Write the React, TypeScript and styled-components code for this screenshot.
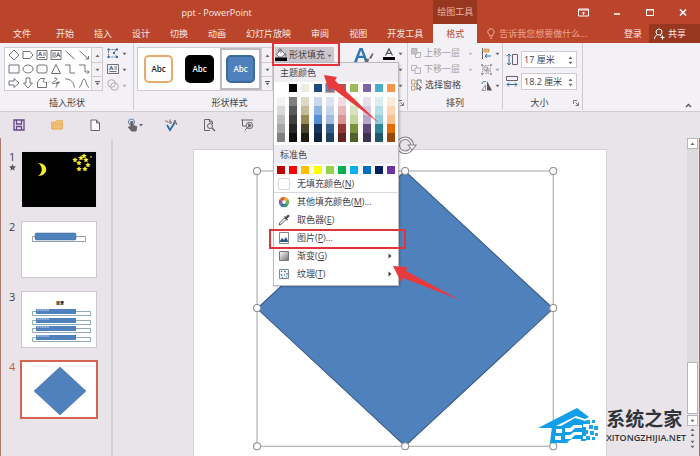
import React from "react";
import styled, { createGlobalStyle, css } from "styled-components";

const color = {
  brand: "#ba452b",
  brandDark: "#98371f",
  ribbon: "#f3f1f5",
  shell: "#e8e4e9",
  line: "#cfcbd1",
  text: "#444148",
  muted: "#a3a0a7",
  blue: "#4f81bd",
  mark: "#e0353a",
};

const Global = createGlobalStyle`
  * { box-sizing: border-box; }
  body { margin: 0; }
  button, input { font: inherit; color: inherit; }
  button { border: 0; padding: 0; background: none; cursor: pointer; }
  svg { display: block; flex: none; overflow: visible; }
`;

const Window = styled.div`
  position: relative;
  display: flex;
  flex-direction: column;
  min-height: 100vh;
  overflow: hidden;
  background: ${color.shell};
  color: ${color.text};
  font: 9px/12px "Open Sans", "Noto Sans CJK SC", sans-serif;
`;

/* ---------- header ---------- */

const Header = styled.header`
  display: grid;
  grid-template-columns: auto auto 1fr;
  grid-template-rows: 24px 19px;
  background: ${color.brand};
  color: #fbe9e4;
`;

const Title = styled.h1`
  margin: 0;
  font: inherit;
  text-align: center;
  padding: 7px 0 0;
`;

const ContextLabel = styled.div`
  display: flex;
  align-items: center;
  justify-content: center;
  background: ${color.brandDark};
  color: #eab4a5;
`;

const WindowControls = styled.div`
  display: flex;
  justify-content: flex-end;
  align-items: center;
  gap: 23px;
  padding-right: 12px;
`;

const TabList = styled.nav`
  display: flex;
  padding-left: 3px;
`;

const Tab = styled.button<{ $active?: boolean; $file?: boolean }>`
  padding: 0 10px;
  white-space: nowrap;
  ${(p) => p.$file && css`margin-right: 5px;`}
  ${(p) =>
    p.$active &&
    css`
      padding: 0 13px;
      background: ${color.ribbon};
      color: ${color.brand};
    `}
`;

const HeaderTools = styled.div`
  display: flex;
  align-items: stretch;
`;

const TellMe = styled.label`
  display: flex;
  flex: 1;
  align-items: center;
  gap: 4px;
  padding-left: 10px;
  color: #eda593;
`;

const TellInput = styled.input`
  flex: 1;
  min-width: 0;
  padding: 0;
  border: 0;
  outline: 0;
  background: none;
  &::placeholder { color: #eda593; opacity: 1; }
`;

const HeaderButton = styled.button<{ $dark?: boolean }>`
  display: flex;
  align-items: center;
  gap: 3px;
  padding: 0 ${(p) => (p.$dark ? "14px 0 5px" : "7px")};
  background: ${(p) => (p.$dark ? color.brandDark : "none")};
  white-space: nowrap;
`;

/* ---------- ribbon ---------- */

const Ribbon = styled.section`
  display: flex;
  height: 69px;
  background: ${color.ribbon};
  border-bottom: 1px solid ${color.line};
  padding: 0 8px 0 1px;
`;

const Group = styled.div<{ $divided?: boolean; $width: number }>`
  display: flex;
  flex-direction: column;
  width: ${(p) => p.$width}px;
  padding: 4px 3px 0;
  margin-bottom: 1px;
  border-right: ${(p) => (p.$divided ? `1px solid ${color.line}` : "0")};
`;

const GroupBody = styled.div<{ $gap?: number }>`
  display: flex;
  flex: 1;
  gap: ${(p) => p.$gap ?? 4}px;
`;

const GroupFooter = styled.div<{ $shift?: boolean }>`
  display: flex;
  align-items: center;
  height: 14px;
  padding-right: ${(p) => (p.$shift ? "14px" : "0")};
`;

const GroupName = styled.span`
  flex: 1;
  text-align: center;
`;

const Gallery = styled.div`
  display: flex;
  height: 44px;
  border: 1px solid ${color.line};
  background: #fff;
`;

const ShapeGrid = styled.div`
  display: grid;
  grid-template-columns: repeat(6, 14px);
  grid-template-rows: repeat(3, 14px);
  padding-left: 2px;
`;

const ShapeButton = styled.button`
  display: flex;
  align-items: center;
  justify-content: center;
`;

const GalleryScroll = styled.div`
  display: grid;
  grid-template-rows: repeat(3, 1fr);
  width: 11px;
  border-left: 1px solid ${color.line};
  background: ${color.ribbon};
`;

const ScrollStep = styled.button`
  display: flex;
  align-items: center;
  justify-content: center;
  & + & { border-top: 1px solid ${color.line}; }
`;

const Stack = styled.div<{ $roomy?: boolean }>`
  display: flex;
  flex-direction: column;
  gap: ${(p) => (p.$roomy ? 5 : 4)}px;
  padding-top: ${(p) => (p.$roomy ? 4 : 0)}px;
`;

const ToolButton = styled.button<{ $disabled?: boolean; $wide?: boolean }>`
  display: flex;
  align-items: center;
  gap: 3px;
  height: 12px;
  width: ${(p) => (p.$wide ? "62px" : "auto")};
  color: ${(p) => (p.$disabled ? color.muted : color.text)};
  white-space: nowrap;
  & > span { flex: 1; text-align: left; }
`;

const StyleList = styled.div`
  display: flex;
`;

const StyleCell = styled.button<{ $selected?: boolean }>`
  width: 41px;
  padding: 4px;
  border: 2px solid ${(p) => (p.$selected ? "#bdbabf" : "transparent")};
`;

const StyleSample = styled.span<{ $fill: string; $edge: string; $ink: string }>`
  display: flex;
  align-items: center;
  justify-content: center;
  height: 28px;
  border: 2px solid ${(p) => p.$edge};
  border-radius: 5px;
  background: ${(p) => p.$fill};
  color: ${(p) => p.$ink};
  font-size: 8px;
  font-weight: 600;
`;

const SizeRow = styled.div`
  display: flex;
  align-items: center;
  gap: 3px;
`;

const SpinBox = styled.span`
  display: flex;
  align-items: center;
  width: 56px;
  height: 17px;
  padding: 0 3px 0 2px;
  border: 1px solid ${color.line};
  background: #fff;
`;

const SizeInput = styled.input`
  flex: 1;
  min-width: 0;
  padding: 0;
  border: 0;
  outline: 0;
  background: none;
`;

const RibbonEnd = styled.div`
  display: flex;
  flex: 1;
  align-items: flex-end;
  justify-content: flex-end;
  padding-bottom: 3px;
`;

/* ---------- fill menu ---------- */

const FillAnchor = styled.div`
  position: relative;
  z-index: 2;
  height: 15px;
`;

const FillButton = styled.button`
  display: flex;
  align-items: center;
  gap: 2px;
  width: 59px;
  height: 16px;
  background: #cbc7cc;
  white-space: nowrap;
`;

const Menu = styled.div`
  position: absolute;
  top: 15px;
  left: -2px;
  width: 126px;
  padding-bottom: 2px;
  border: 1px solid #bcb8be;
  background: #fff;
  box-shadow: 1px 1px 2px rgba(0, 0, 0, 0.2);
`;

const MenuHeading = styled.h2`
  height: 19px;
  margin: 0;
  padding: 4px 6px 0;
  background: #efedf1;
  font: inherit;
`;

const SwatchRow = styled.div<{ $top: number }>`
  display: flex;
  justify-content: space-between;
  padding: ${(p) => p.$top}px 3px 0;
`;

const SwatchColumn = styled.div`
  display: flex;
  flex-direction: column;
`;

const Swatch = styled.button<{ $color: string; $ring?: boolean; $tall?: boolean }>`
  display: block;
  width: 8px;
  height: ${(p) => (p.$tall ? 9 : 8)}px;
  background: ${(p) => p.$color};
  box-shadow: ${(p) => (p.$ring ? "0 0 0 1px #e3a08f" : "none")};
`;

const MenuItem = styled.button<{ $ruled?: boolean }>`
  display: flex;
  align-items: center;
  gap: 7px;
  width: 100%;
  height: 18px;
  padding: 0 6px 0 4px;
  text-align: left;
  border-bottom: ${(p) => (p.$ruled ? "1px solid #dcd9de" : "0")};
  & > span { flex: 1; }
`;

const Emphasis = styled.div<{ $x: number; $y: number; $w: number; $h: number }>`
  position: absolute;
  left: ${(p) => p.$x}px;
  top: ${(p) => p.$y}px;
  width: ${(p) => p.$w}px;
  height: ${(p) => p.$h}px;
  border: 2px solid ${color.mark};
  pointer-events: none;
`;

const Pointer = styled.svg<{ $x: number; $y: number }>`
  position: absolute;
  left: ${(p) => p.$x}px;
  top: ${(p) => p.$y}px;
  pointer-events: none;
`;

/* ---------- quick access and workspace ---------- */

const QuickBar = styled.div`
  display: flex;
  align-items: center;
  gap: 24px;
  height: 26px;
  padding-left: 12px;
`;

const QuickButton = styled.button`
  display: flex;
  align-items: center;
  justify-content: center;
  width: 14px;
  height: 14px;
`;

const Workspace = styled.main`
  display: flex;
  flex: 1;
  border-left: 1px solid #a9796f;
  border-right: 1px solid #b4675b;
`;

const SlidePane = styled.aside`
  display: flex;
  flex-direction: column;
  gap: 13px;
  width: 112px;
  margin-top: 1px;
  padding: 12px 14px 0 8px;
  border-right: 2px solid #d6d1d8;
`;

const SlideEntry = styled.button<{ $active?: boolean }>`
  display: flex;
  gap: 4px;
  text-align: left;
  color: ${(p) => (p.$active ? "#c85a44" : color.text)};
`;

const SlideNumber = styled.span`
  display: flex;
  flex-direction: column;
  gap: 1px;
  width: 8px;
  font-size: 11px;
  line-height: 12px;
`;

const Thumb = styled.span<{ $active?: boolean; $dark?: boolean }>`
  width: 76px;
  height: 57px;
  border: 1px solid ${(p) => (p.$active ? "#d26450" : p.$dark ? "#e4e0e5" : "#cbc7cd")};
  box-shadow: ${(p) => (p.$active ? "0 0 0 1px #d26450" : "none")};
  background: ${(p) => (p.$dark ? "#000" : "#fff")};
`;

const Canvas = styled.section`
  display: flex;
  flex: 1;
  justify-content: center;
  padding-top: 11px;
`;

const Slide = styled.div`
  width: 72%;
  border: 1px solid #d2ced4;
  border-bottom: 0;
  background: #fff;
`;

const ScrollBar = styled.div`
  display: flex;
  flex-direction: column;
  align-items: center;
  width: 11px;
  margin-right: 1px;
  background: #dcdadd;
`;

const BarButton = styled.button<{ $plain?: boolean }>`
  display: flex;
  align-items: center;
  justify-content: center;
  width: 11px;
  height: ${(p) => (p.$plain ? 12 : 11)}px;
  border: ${(p) => (p.$plain ? "0" : "1px solid #b9b5bb")};
  background: ${(p) => (p.$plain ? color.shell : "#fff")};
`;

const Track = styled.div`
  display: flex;
  flex: 1;
  align-items: flex-end;
`;

const Grip = styled.div`
  width: 11px;
  height: 52px;
  border: 1px solid #b9b5bb;
  background: #fff;
`;

const BarEnd = styled.div`
  width: 11px;
  padding: 1px 0 6px;
  background: ${color.shell};
`;

const Brand = styled.div`
  position: absolute;
  right: 14px;
  bottom: 12px;
  display: flex;
  align-items: flex-end;
  gap: 7px;
  color: #30343a;
`;

const BrandText = styled.div`
  display: flex;
  flex-direction: column;
`;

const BrandName = styled.strong`
  font: 700 19px/29px "Noto Sans CJK SC", sans-serif;
`;

const BrandSite = styled.span`
  font: 600 9px/12px "Open Sans", sans-serif;
  white-space: nowrap;
`;

/* ---------- drawings ---------- */

const Caret = ({ up, bar, fill = "#6a666d" }: { up?: boolean; bar?: boolean; fill?: string }) => (
  <svg width="5" height="5" viewBox="0 0 5 5">
    {bar && <path d="M0 .5h5" stroke={fill} />}
    <path d={up ? "M.5 4L2.5 1.5 4.5 4z" : "M.5 1.7h4L2.5 4.2z"} fill={fill} />
  </svg>
);

const Launcher = () => (
  <svg width="6" height="6" viewBox="0 0 6 6" fill="none" stroke="#777">
    <path d="M.5 4V.5H4M2.5 2.5l2.5 2.5M5.5 2.5v3h-3" />
  </svg>
);

const shapes: { name: string; art: React.ReactNode }[] = [
  { name: "菱形", art: <path d="M6 1l5 5-5 5-5-5z" /> },
  { name: "五边形", art: <path d="M1 2.5h7L11 6 8 9.5H1z" /> },
  { name: "文本框", art: <><path d="M1 1.5h10v9H1zM3 8.5h6M7 4h3M7 6h3" /><path d="M2.5 7L4.2 3l1.7 4M3 5.8h2.4" stroke="#435b80" /></> },
  { name: "竖排文本框", art: <><path d="M1 1.5h10v9H1zM3 3v6M5 3v6" /><path d="M6.5 8l1.7-4.5L10 8M7 6.5h2.4" stroke="#435b80" /></> },
  { name: "直线", art: <path d="M1.5 2l9 8" /> },
  { name: "箭头", art: <path d="M1.5 2l9 8M10.5 7v3h-3" /> },
  { name: "矩形", art: <path d="M1 2h10v8H1z" /> },
  { name: "椭圆", art: <ellipse cx="6" cy="6" rx="5" ry="4" /> },
  { name: "圆角矩形", art: <rect x="1" y="2" width="10" height="8" rx="2" /> },
  { name: "三角形", art: <path d="M6 1.5l4.5 9h-9z" /> },
  { name: "肘形连接符", art: <path d="M1 2h5v8h5" /> },
  { name: "肘形箭头", art: <path d="M1 2h6v7h4M9.5 7.3L11.2 9l-1.7 1.8" /> },
  { name: "右箭头", art: <path d="M1 4h5V1.5L11 6l-5 4.500V8H1z" /> },
  { name: "下箭头", art: <path d="M4 1h4v5h2.500L6 11 1.500 6H4z" /> },
  { name: "任意多边形", art: <path d="M1.500 10.500V5l3-3.500h4C6 5 8 6 10.500 5v5.500z" /> },
  { name: "自由曲线", art: <path d="M4 1.500C8 0 8 3 4 4.500s-1 3.500 3 1-1 3-1 5M6 7l4-2" /> },
  { name: "弧形", art: <path d="M1.500 2c5 0 8 3 9 8.500" /> },
  { name: "曲线", art: <path d="M1 10.500C4 9 4 2 6 2s2 7 5 8.500" /> },
];

const ShapeIcon = ({ children }: { children: React.ReactNode }) => (
  <svg width="12" height="12" viewBox="0 0 12 12" fill="none" stroke="#626067" strokeWidth=".9">
    {children}
  </svg>
);

const EditPoints = () => (
  <svg width="12" height="12" viewBox="0 0 12 12" fill="none" stroke="#557" strokeWidth=".8">
    <path d="M1.500 2.500h8L7 6l3 4H1.500z" strokeDasharray="2 1" />
    <path d="M.5 1.500h2v2h-2zM9 1.500h2v2H9zM6 5h2v2H6zM.5 9h2v2h-2zM9 9h2v2H9z" fill="#2d6ca0" stroke="none" />
  </svg>
);

const TextBoxIcon = () => (
  <svg width="12" height="12" viewBox="0 0 12 12" fill="none" stroke="#66636b" strokeWidth=".9">
    <path d="M.5 1.500h11v9H.5zM2.500 8.500h7M7.500 4H10M7.500 6H10" />
    <path d="M2.500 7L4.300 3l1.700 4M3.200 5.700h2.200" stroke="#345d8c" />
  </svg>
);

const MergeIcon = () => (
  <svg width="12" height="12" viewBox="0 0 12 12" fill="none" stroke="#b1aeb5">
    <circle cx="4.500" cy="4.500" r="3.800" />
    <circle cx="7.500" cy="7.500" r="3.800" />
  </svg>
);

const BucketIcon = () => (
  <svg width="12" height="14" viewBox="0 0 12 14">
    <path d="M3 4.500L6 2l4 4-3.500 3H4L1.500 6.500z" fill="#fff" stroke="#555" strokeWidth=".8" />
    <path d="M4 4V1.500c0-1 2-1 2 0V5" fill="none" stroke="#555" strokeWidth=".8" />
    <path d="M10 5c1.500 1 1.500 2.500 1 4-.8-.5-1-2-1-4z" fill="#3d72ad" />
    <path d="M0 9.500h12v3.500H0z" fill="#000" />
  </svg>
);

const WordArtIcon = () => (
  <svg width="20" height="17" viewBox="0 0 20 17">
    <path d="M1 17L6.500 3h3L15 17h-3l-1.300-4H5.300L4 17zM6 10.800h4L8 5.500z" fill="#2e75b6" />
    <path d="M12 17c0-3 2-4 4-3 .5 2-1.500 3.500-4 3zM16 13l3.500-5 1 1-2.500 5z" fill="#666" />
  </svg>
);

const TextFillIcon = () => (
  <svg width="12" height="13" viewBox="0 0 12 13">
    <path d="M2.500 8.500L6 1.800l3.500 6.700M3.800 6.300h4.400" fill="none" stroke="#555" strokeWidth="1.300" />
    <path d="M0 10h12v3H0z" fill="#000" />
  </svg>
);

const LayerIcon = ({ back }: { back?: boolean }) => (
  <svg width="10" height="10" viewBox="0 0 10 10" stroke="#b3b0b7" fill="none">
    <path d={back ? "M.5 1.500h5v5h-5z" : "M4.500 4.500h5v5h-5z"} />
    <path d={back ? "M4 4h5.500v5.500H4z" : "M.5.5H6V6H.5z"} fill={back ? "#f3f1f5" : "#c4c1c8"} />
  </svg>
);

const SelectPaneIcon = () => (
  <svg width="11" height="12" viewBox="0 0 11 12" fill="none" strokeWidth=".9">
    <path d="M.5 1h3.500v4H.5zM.5 7H4v4H.5z" stroke="#c6945a" />
    <path d="M6 5V1h4v3" stroke="#666" />
    <path d="M6 4.500v6l1.500-1.500 1.200 2.300.9-.5-1-2.200h1.900z" fill="#fff" stroke="#555" />
  </svg>
);

const AlignIcon = () => (
  <svg width="11" height="11" viewBox="0 0 11 11">
    <path d="M1.500 0v11" stroke="#666" />
    <path d="M3 1h5v3H3z" fill="#e8b66c" stroke="#b9854a" strokeWidth=".6" />
    <path d="M10 8H4M6 6L4 8l2 2" stroke="#2e6da4" fill="none" />
  </svg>
);

const GroupIcon = () => (
  <svg width="11" height="11" viewBox="0 0 11 11" fill="none" stroke="#a29fa6">
    <path d="M1.500 1.500h8v8h-8z" strokeDasharray="1.500 1" />
    <path d="M3 3h3.500v3.500H3zM5 5h3v3H5z" />
    <path d="M0 0h2v2H0zM9 0h2v2H9zM0 9h2v2H0zM9 9h2v2H9z" fill="#a29fa6" stroke="none" />
  </svg>
);

const RotateIcon = () => (
  <svg width="11" height="11" viewBox="0 0 11 11">
    <path d="M6 1l5 9.500H6z" fill="#555" />
    <path d="M4.500 5v5.500H.8z" fill="none" stroke="#888" strokeWidth=".8" />
    <path d="M1 4c0-2 2-3 4-2.200" fill="none" stroke="#2e6da4" />
  </svg>
);

const SizeIcon = ({ wide }: { wide?: boolean }) => (
  <svg width="12" height="13" viewBox="0 0 12 13" fill="none">
    {wide ? (
      <>
        <path d="M.5 1.500h11v4H.5z" stroke="#66636b" />
        <path d="M1 9.500h10M3 7.500L1 9.500l2 2M9 7.500l2 2-2 2" stroke="#2e6da4" />
      </>
    ) : (
      <>
        <path d="M6.500 1.500h5v10h-5z" stroke="#66636b" />
        <path d="M3 1v11M1 3.200L3 1l2 2.200M1 9.800L3 12l2-2.200" stroke="#2e6da4" />
      </>
    )}
  </svg>
);

const quick: { name: string; art: React.ReactNode; caret?: boolean }[] = [
  { name: "保存", art: <path d="M2 2h10v10H2zM4.500 2v4h5V2M4.500 12V8.500h5V12" stroke="#66458c" strokeWidth="1.300" /> },
  { name: "打开", art: <path d="M1.500 11V4h4l1-1.500h6V11zM2 11l2-5h9l-1.500 5z" fill="#f0c078" stroke="#e8ad5a" strokeWidth=".8" /> },
  { name: "新建", art: <path d="M3 2h5.500l3 3v7.500H3zM8.500 2v3h3" fill="#fff" /> },
  { name: "触摸模式", caret: true, art: <><circle cx="5.500" cy="4" r="3" stroke="#5a83ad" /><path d="M4.800 3.500v6L3 8.500 2.500 9.500 5.500 13h4.500l.8-4.500-4-1V3.500z" fill="#666" /></> },
  { name: "拼写检查", art: <><path d="M3 7l3 5 4.500-7" stroke="#2e6da4" strokeWidth="1.800" /><path d="M1 4c1-2 3-1 3 1M6 1.500v4c2 0 2-2 0-2M9 7l1.800-5L13 7M9.800 5h2.300" strokeWidth="1" /></> },
  { name: "打印预览", art: <><path d="M8 12.500H2.500v-11H8l2.500 2.500v2M7.500 1.500V4h3" /><circle cx="8" cy="8" r="2.500" /><path d="M10 10l3 3" strokeWidth="1.500" /></> },
  { name: "从头开始放映", art: <><path d="M1 2h12M2.500 2v6H6M5 12l3-3" /><circle cx="9.500" cy="7.500" r="3.200" /><path d="M8.700 5.800v3.400l2.600-1.700z" fill="#666" /></> },
];

const StarShape = ({ x, y, r }: { x: number; y: number; r: number }) => {
  const pts = Array.from({ length: 10 }, (_, i) => {
    const d = i % 2 ? r * 0.5 : r;
    const a = (Math.PI * i) / 5 - Math.PI / 2;
    return `${x + d * Math.cos(a)},${y + d * Math.sin(a)}`;
  }).join(" ");
  return <polygon points={pts} fill="#f5ee2c" />;
};

const NightThumb = () => (
  <svg width="74" height="55" viewBox="0 0 74 55">
    <path d="M16 11c11 0 11 13 0 13 5-3 5-10 0-13z" fill="#f5ee2c" />
    {[[53, 8], [59, 6], [62, 4], [57, 11], [64, 8], [66, 13], [57, 17], [63, 17]].map(([x, y]) => (
      <StarShape key={`${x}-${y}`} x={x} y={y} r={2.800} />
    ))}
    <StarShape x={69} y={5} r={1.200} />
  </svg>
);

const BarThumb = () => (
  <svg width="74" height="55" viewBox="0 0 74 55">
    <path d="M10.500 14.500h53v5h-53z" fill="#fff" stroke="#989ca8" />
    <rect x="13" y="11" width="41" height="7" rx="1.500" fill={color.blue} stroke="#3d6799" strokeWidth=".5" />
  </svg>
);

const ListThumb = () => (
  <svg width="74" height="55" viewBox="0 0 74 55" fontFamily="Noto Sans CJK SC, sans-serif">
    <text x="38" y="13" fontSize="4" fontWeight="700" textAnchor="middle" fill="#000">目录</text>
    {[19, 28, 36, 45].map((y) => (
      <g key={y}>
        <path d={`M10.500 ${y + .5}h58v4h-58z`} fill="#fff" stroke="#7294a6" strokeWidth=".8" />
        <path d={`M14 ${y - 2}h40v5H14z`} fill={color.blue} />
        <path d={`M15 ${y - 1}h12`} stroke="#cfdff2" strokeDasharray="2 .5" />
      </g>
    ))}
  </svg>
);

const DiamondThumb = () => (
  <svg width="74" height="55" viewBox="0 0 74 55">
    <path d="M38 5l26 24-26 24-26-24z" fill={color.blue} stroke="#3d6799" strokeWidth=".5" />
  </svg>
);

const handles = [[63, 21], [211, 21], [359, 21], [63, 158], [359, 158], [63, 296], [211, 296], [359, 296]];

const SelectedDiamond = () => (
  <svg width="100%" viewBox="0 0 411 306" fill="none" role="img" aria-label="菱形">
    <path d="M211 21l148 137.500L211 296 63 158.500z" fill={color.blue} stroke="#36567f" />
    <path d="M63 21h296v275H63z" stroke="#a19fa3" />
    {handles.map(([x, y]) => (
      <circle key={`${x}-${y}`} cx={x} cy={y} r="3.500" fill="#fff" stroke="#8d8b8f" />
    ))}
    <path d="M217-1a7 7 0 1 1 1-3" stroke="#858287" strokeWidth="3.500" />
    <path d="M217-1a7 7 0 1 1 1-3" stroke="#f6f4f7" strokeWidth="1.500" />
    <path d="M214-5h8l-4 5z" fill="#fff" stroke="#858287" />
  </svg>
);

const BrandLogo = () => (
  <svg width="61" height="36" viewBox="0 0 61 36">
    <path d="M0 20L39 0l12 9-4 2-9-3-24 12z" fill="#129ee8" />
    <path d="M14 18h9l14-8 11 3v20H33l-4 2H12z" fill="#129ee8" />
    <path d="M18 21h6v4h-6zM17 28h6v4h-6zM27 20h5l4-3h8v3h-7l-4 4h-6zM27 27h5l4-3h8v3h-7l-4 4h-6zM29 34l5-3h9v2h-8l-2 1z" fill="#fff" />
    <path d="M48 12h4v4h-4zM54 12h3v3h-3zM51 17h4v4h-4zM46 22h4v4h-4zM56 18h4v4h-4zM52 23h4v4h-4zM48 28h4v4h-4zM57 25h3v3h-3zM54 29h3v3h-3z" fill="#1ca4ec" />
    <path d="M45 16h3v3h-3zM45 28h3v3h-3z" fill="#fff" />
  </svg>
);

const menuArt = {
  none: <path d="M.5.5h11v11H.5z" fill="#fff" stroke="#d8d5da" />,
  wheel: (
    <g strokeWidth="3.500" fill="none">
      <path d="M6 2.500a3.500 3.500 0 0 1 3 1.700" stroke="#e9a23c" />
      <path d="M9 4.200a3.500 3.500 0 0 1 0 3.600" stroke="#76ad55" />
      <path d="M9 7.800A3.500 3.500 0 0 1 6 9.500" stroke="#37976b" />
      <path d="M6 9.500a3.500 3.500 0 0 1-3-1.700" stroke="#416fae" />
      <path d="M3 7.800a3.500 3.500 0 0 1 0-3.600" stroke="#8e5c9c" />
      <path d="M3 4.200a3.500 3.500 0 0 1 3-1.700" stroke="#dd5b45" />
    </g>
  ),
  dropper: <><path d="M1 11l1-2.500L6.500 4 8 5.500 3.500 10z" fill="#fff" stroke="#555" /><path d="M6 3l1-1 1 1 1.500-2c1-.8 2.500.5 1.700 1.700L9 4.500l1 1-1 1z" fill="#444" /></>,
  picture: <><path d="M1.500.5h9v11h-9z" fill="#fff" stroke="#888" /><path d="M2 9l2-3 2 2 2-3 2 4v1H2z" fill="#28588a" /></>,
  gradient: <><defs><linearGradient id="fade" x2="1" y2="1"><stop stopColor="#fff" /><stop offset="1" stopColor="#736e78" /></linearGradient></defs><path d="M1.500 1.500h9v9h-9z" fill="url(#fade)" stroke="#777" /></>,
  texture: <><path d="M1.500 1.500h9v9h-9z" fill="#eff5fa" stroke="#7a8796" /><path d="M3 3l1 1M6 3l2 1M3 6l1 2M6 7h1M9 5v2M4 9l1 1M8 9h1" stroke="#33658f" /></>,
};

/* ---------- data ---------- */

const tabs = ["文件", "开始", "插入", "设计", "切换", "动画", "幻灯片放映", "审阅", "视图", "开发工具"];

const themeColors = ["#ffffff", "#000000", "#eeece1", "#1f497d", "#6d7fa9", "#c0504d", "#9bbb59", "#8064a2", "#4bacc6", "#f79646"];

const shades = [
  ["#f2f2f2", "#d9d9d9", "#bfbfbf", "#a6a6a6", "#7f7f7f"],
  ["#7f7f7f", "#595959", "#404040", "#262626", "#0d0d0d"],
  ["#ddd9c3", "#c4bd97", "#948a54", "#494429", "#1d1b10"],
  ["#c6d9f0", "#8db3e2", "#548dd4", "#17365d", "#0f243e"],
  ["#dbe5f1", "#c6d4ea", "#a5bbdd", "#366092", "#244061"],
  ["#f2dcdb", "#e5b9b7", "#d99694", "#953734", "#632423"],
  ["#ebf1dd", "#d7e3bc", "#c3d69b", "#76923c", "#4f6128"],
  ["#e5e0ec", "#d5cae0", "#b9a6ca", "#5f497a", "#3f3151"],
  ["#dbeef3", "#b7dde8", "#92cddc", "#31859b", "#205867"],
  ["#fdeada", "#fbd5b5", "#fac08f", "#e36c09", "#974806"],
];

const standardColors = ["#c00000", "#ff0000", "#ffc000", "#ffff00", "#92d050", "#00b050", "#00b0f0", "#0070c0", "#002060", "#7030a0"];

const menuItems: { art: keyof typeof menuArt; label: string; k: string; tail?: string; sub?: boolean }[] = [
  { art: "wheel", label: "其他填充颜色", k: "M", tail: "..." },
  { art: "dropper", label: "取色器", k: "E" },
  { art: "picture", label: "图片", k: "P", tail: "..." },
  { art: "gradient", label: "渐变", k: "G", sub: true },
  { art: "texture", label: "纹理", k: "T", sub: true },
];

const slides = [
  { art: <NightThumb />, dark: true, star: true },
  { art: <BarThumb /> },
  { art: <ListThumb /> },
  { art: <DiamondThumb />, active: true },
];

const MenuGlyph = ({ art }: { art: keyof typeof menuArt }) => (
  <svg width="12" height="12" viewBox="0 0 12 12" fill="none">{menuArt[art]}</svg>
);

const ScrollSteps = () => (
  <GalleryScroll>
    <ScrollStep aria-label="上一行"><Caret up /></ScrollStep>
    <ScrollStep aria-label="下一行"><Caret /></ScrollStep>
    <ScrollStep aria-label="更多"><Caret bar /></ScrollStep>
  </GalleryScroll>
);

const FillMenu = () => (
  <Menu role="menu">
    <MenuHeading>主题颜色</MenuHeading>
    <SwatchRow $top={2}>
      {themeColors.map((c, i) => <Swatch key={c} $color={c} $ring={i === 4} aria-label={c} />)}
    </SwatchRow>
    <SwatchRow $top={5}>
      {shades.map((column, i) => (
        <SwatchColumn key={i}>
          {column.map((c) => <Swatch key={c} $color={c} $tall aria-label={c} />)}
        </SwatchColumn>
      ))}
    </SwatchRow>
    <SwatchRow $top={3} />
    <MenuHeading>标准色</MenuHeading>
    <SwatchRow $top={2}>
      {standardColors.map((c) => <Swatch key={c} $color={c} aria-label={c} />)}
    </SwatchRow>
    <SwatchRow $top={1} />
    <MenuItem $ruled role="menuitem"><MenuGlyph art="none" /><span>无填充颜色(<u>N</u>)</span></MenuItem>
    {menuItems.map((m) => (
      <MenuItem key={m.k} role="menuitem">
        <MenuGlyph art={m.art} />
        <span>{m.label}(<u>{m.k}</u>){m.tail}</span>
        {m.sub && <svg width="4" height="6" viewBox="0 0 4 6"><path d="M.5.5L3.500 3 .5 5.500z" fill="#444" /></svg>}
      </MenuItem>
    ))}
  </Menu>
);

export default function App() {
  return (
    <Window>
      <Global />
      <Header>
        <Title>ppt - PowerPoint</Title>
        <ContextLabel>绘图工具</ContextLabel>
        <WindowControls>
          <button aria-label="功能区显示选项">
            <svg width="11" height="9" viewBox="0 0 11 9" fill="none" stroke="#fff"><path d="M.5 1h10v7H.5zM.5 2h10M5.500 7V4M4 5.500L5.500 4 7 5.500" /></svg>
          </button>
          <button aria-label="最小化">
            <svg width="10" height="9" viewBox="0 0 10 9"><path d="M2 6h6" stroke="#fff" strokeWidth="1.500" /></svg>
          </button>
          <button aria-label="最大化">
            <svg width="10" height="9" viewBox="0 0 10 9" fill="none" stroke="#fff"><path d="M1.500 1.500h7v6h-7zM1 2h8" /></svg>
          </button>
          <button aria-label="关闭">
            <svg width="10" height="9" viewBox="0 0 10 9" stroke="#fff" strokeWidth="1.700"><path d="M2 1.500l6 6M8 1.500l-6 6" /></svg>
          </button>
        </WindowControls>
        <TabList>
          {tabs.map((t, i) => <Tab key={t} $file={i === 0}>{t}</Tab>)}
        </TabList>
        <Tab $active>格式</Tab>
        <HeaderTools>
          <TellMe>
            <svg width="8" height="11" viewBox="0 0 8 11" fill="none" stroke="#f0b2a2"><path d="M2.500 8V6.800C-.5 4.500 1 .8 4 .8s4.500 3.700 1.500 6V8zM2.800 10h2.400" /></svg>
            <TellInput aria-label="告诉我" placeholder="告诉我您想要做什么..." />
          </TellMe>
          <HeaderButton>登录</HeaderButton>
          <HeaderButton $dark>
            <svg width="11" height="12" viewBox="0 0 11 12" fill="none" stroke="#fff"><circle cx="5" cy="4" r="3" /><path d="M.5 11c0-2.500 1.500-4 3.500-4.300M6 7l1.500 1M8.500 7.500v4M6.500 9.500h4" /></svg>
            共享
          </HeaderButton>
        </HeaderTools>
      </Header>

      <Ribbon>
        <Group $width={133} $divided>
          <GroupBody>
            <Gallery>
              <ShapeGrid>
                {shapes.map((s) => <ShapeButton key={s.name} aria-label={s.name}><ShapeIcon>{s.art}</ShapeIcon></ShapeButton>)}
              </ShapeGrid>
              <ScrollSteps />
            </Gallery>
            <Stack>
              <ToolButton aria-label="编辑形状"><EditPoints /><Caret /></ToolButton>
              <ToolButton aria-label="文本框"><TextBoxIcon /><Caret /></ToolButton>
              <ToolButton aria-label="合并形状"><MergeIcon /><Caret fill="#b1aeb5" /></ToolButton>
            </Stack>
          </GroupBody>
          <GroupFooter><GroupName>插入形状</GroupName></GroupFooter>
        </Group>

        <Group $width={205}>
          <GroupBody $gap={2}>
            <Gallery>
              <StyleList>
                <StyleCell><StyleSample $fill="#fff" $edge="#e8ab6b" $ink="#222">Abc</StyleSample></StyleCell>
                <StyleCell><StyleSample $fill="#000" $edge="#000" $ink="#fff">Abc</StyleSample></StyleCell>
                <StyleCell $selected><StyleSample $fill={color.blue} $edge="#3c6a9f" $ink="#fff">Abc</StyleSample></StyleCell>
              </StyleList>
              <ScrollSteps />
            </Gallery>
            <FillAnchor>
              <FillButton aria-haspopup="menu" aria-expanded="true"><BucketIcon />形状填充<Caret /></FillButton>
              <FillMenu />
              <Emphasis $x={-3} $y={-5} $w={68} $h={24} />
              <Emphasis $x={-6} $y={182} $w={137} $h={20} />
              <Pointer $x={49} $y={28} width="56" height="50" viewBox="0 0 56 50">
                <path d="M0 0l13 2-2 3.500L55 48 8 13l-3 3z" fill="#e83a3d" />
              </Pointer>
              <Pointer $x={118} $y={219} width="68" height="36" viewBox="0 0 68 36">
                <path d="M0 0l14 1-1 4 54 29L10 12l-2 4z" fill="#e83a3d" />
              </Pointer>
            </FillAnchor>
          </GroupBody>
          <GroupFooter $shift><GroupName>形状样式</GroupName></GroupFooter>
        </Group>

        <Group $width={69} $divided>
          <GroupBody $gap={10}>
            <ToolButton aria-label="艺术字样式"><svg width="8" height="1" /><WordArtIcon /></ToolButton>
            <Stack>
              <ToolButton aria-label="文本填充"><TextFillIcon /><Caret /></ToolButton>
              <ToolButton aria-label="文本轮廓"><TextFillIcon /><Caret /></ToolButton>
              <ToolButton aria-label="文本效果"><TextFillIcon /><Caret /></ToolButton>
            </Stack>
          </GroupBody>
          <GroupFooter><GroupName /><Launcher /></GroupFooter>
        </Group>

        <Group $width={95} $divided>
          <GroupBody $gap={8}>
            <Stack>
              <ToolButton $wide $disabled><LayerIcon /><span>上移一层</span><Caret fill="#bbb8be" /></ToolButton>
              <ToolButton $wide $disabled><LayerIcon back /><span>下移一层</span><Caret fill="#bbb8be" /></ToolButton>
              <ToolButton $wide><SelectPaneIcon /><span>选择窗格</span></ToolButton>
            </Stack>
            <Stack>
              <ToolButton aria-label="对齐"><AlignIcon /><Caret /></ToolButton>
              <ToolButton aria-label="组合"><GroupIcon /><Caret fill="#a29fa6" /></ToolButton>
              <ToolButton aria-label="旋转"><RotateIcon /><Caret /></ToolButton>
            </Stack>
          </GroupBody>
          <GroupFooter><GroupName>排列</GroupName></GroupFooter>
        </Group>

        <Group $width={80} $divided>
          <GroupBody>
            <Stack $roomy>
              {["17 厘米", "18.2 厘米"].map((v, i) => (
                <SizeRow key={v}>
                  <SizeIcon wide={i === 1} />
                  <SpinBox>
                    <SizeInput aria-label={i ? "宽度" : "高度"} defaultValue={v} />
                    <span><Caret up /><Caret /></span>
                  </SpinBox>
                </SizeRow>
              ))}
            </Stack>
          </GroupBody>
          <GroupFooter><GroupName>大小</GroupName><Launcher /></GroupFooter>
        </Group>
        <RibbonEnd>
          <button aria-label="折叠功能区">
            <svg width="7" height="5" viewBox="0 0 7 5" fill="none" stroke="#555" strokeWidth="1.300"><path d="M1 4l2.500-2.500L6 4" /></svg>
          </button>
        </RibbonEnd>
      </Ribbon>

      <QuickBar>
        {quick.map((q) => (
          <QuickButton key={q.name} aria-label={q.name}>
            <svg width="14" height="14" viewBox="0 0 14 14" fill="none" stroke="#66636b">
              {q.art}
              {q.caret && <path d="M13 6h4l-2 2.500z" fill="#66636b" stroke="none" />}
            </svg>
          </QuickButton>
        ))}
      </QuickBar>

      <Workspace>
        <SlidePane>
          {slides.map((s, i) => (
            <SlideEntry key={i} $active={s.active}>
              <SlideNumber>
                {i + 1}
                {s.star && <svg width="7" height="7" viewBox="0 0 7 7"><path d="M3.500 0l1 2.300 2.500.2-2 1.700.6 2.500-2.100-1.400-2.100 1.400.6-2.500-2-1.700 2.500-.2z" fill="#555" /></svg>}
              </SlideNumber>
              <Thumb $active={s.active} $dark={s.dark}>{s.art}</Thumb>
            </SlideEntry>
          ))}
        </SlidePane>
        <Canvas>
          <Slide><SelectedDiamond /></Slide>
        </Canvas>
        <ScrollBar>
          <BarButton aria-label="向上滚动"><Caret up /></BarButton>
          <Track><Grip /></Track>
          <BarEnd>
            <BarButton aria-label="向下滚动"><Caret /></BarButton>
            <BarButton $plain aria-label="上一张幻灯片"><span><Caret up /><Caret up /></span></BarButton>
            <BarButton $plain aria-label="下一张幻灯片"><span><Caret /><Caret /></span></BarButton>
          </BarEnd>
        </ScrollBar>
      </Workspace>

      <Brand>
        <BrandLogo />
        <BrandText>
          <BrandName>系统之家</BrandName>
          <BrandSite>XITONGZHIJIA.NET</BrandSite>
        </BrandText>
      </Brand>
    </Window>
  );
}
